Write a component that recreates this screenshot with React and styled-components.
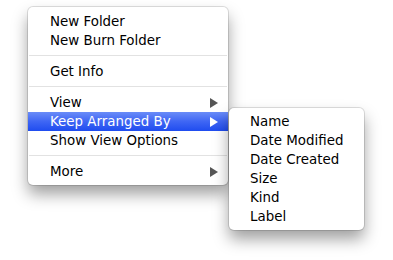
import React from "react";
import styled, { createGlobalStyle } from "styled-components";

const Global = createGlobalStyle`
  html, body {
    margin: 0;
    background: #ffffff;
  }
  body {
    font-family: "Lucida Grande", "DejaVu Sans", sans-serif;
    -webkit-font-smoothing: antialiased;
  }
`;

const Page = styled.div`
  width: 393px;
  height: 260px;
  padding: 7px 0 0 28px;
  box-sizing: border-box;
  overflow: hidden;
`;

const Menu = styled.div`
  width: ${(props) => props.width}px;
  padding: ${(props) => props.pad};
  box-sizing: border-box;
  background: #ffffff;
  border-radius: 5px;
  box-shadow: 0 0 0 1px rgba(0, 0, 0, 0.12), 0 9px 16px rgba(0, 0, 0, 0.38);
  font-size: 13.4px;
  color: #000000;
`;

const Item = styled.div`
  position: relative;
  display: flex;
  align-items: center;
  justify-content: space-between;
  height: 19px;
  padding: 0 10px 0 ${(props) => props.indent || 22}px;
  line-height: 19px;
  white-space: nowrap;
  color: ${(props) => (props.active ? "#ffffff" : "#000000")};
  background: ${(props) =>
    props.active
      ? "linear-gradient(to bottom, #6a8cf8 0%, #3f66f4 50%, #1f4cef 100%)"
      : "transparent"};
`;

const Arrow = styled.span`
  width: 0;
  height: 0;
  border-top: 5px solid transparent;
  border-bottom: 5px solid transparent;
  border-left: 8px solid ${(props) => (props.active ? "#ffffff" : "#555555")};
`;

const Separator = styled.div`
  height: 1px;
  margin: 5px 1px 6px;
  background: #e2e2e2;
`;

const Submenu = styled(Menu)`
  position: absolute;
  left: calc(100% + 1px);
  top: -4px;
  z-index: 2;
`;

const sortKeys = ["Name", "Date Modified", "Date Created", "Size", "Kind", "Label"];

const App = () => {
  return (
    <Page>
      <Global />
      <Menu width={200} pad="5px 0 4px">
        <Item>New Folder</Item>
        <Item>New Burn Folder</Item>
        <Separator />
        <Item>Get Info</Item>
        <Separator />
        <Item>
          View
          <Arrow />
        </Item>
        <Item active>
          Keep Arranged By
          <Arrow active />
          <Submenu width={135} pad="4px 0">
            {sortKeys.map((k) => (
              <Item key={k} indent={21}>
                {k}
              </Item>
            ))}
          </Submenu>
        </Item>
        <Item>Show View Options</Item>
        <Separator />
        <Item>
          More
          <Arrow />
        </Item>
      </Menu>
    </Page>
  );
};

export default App;
